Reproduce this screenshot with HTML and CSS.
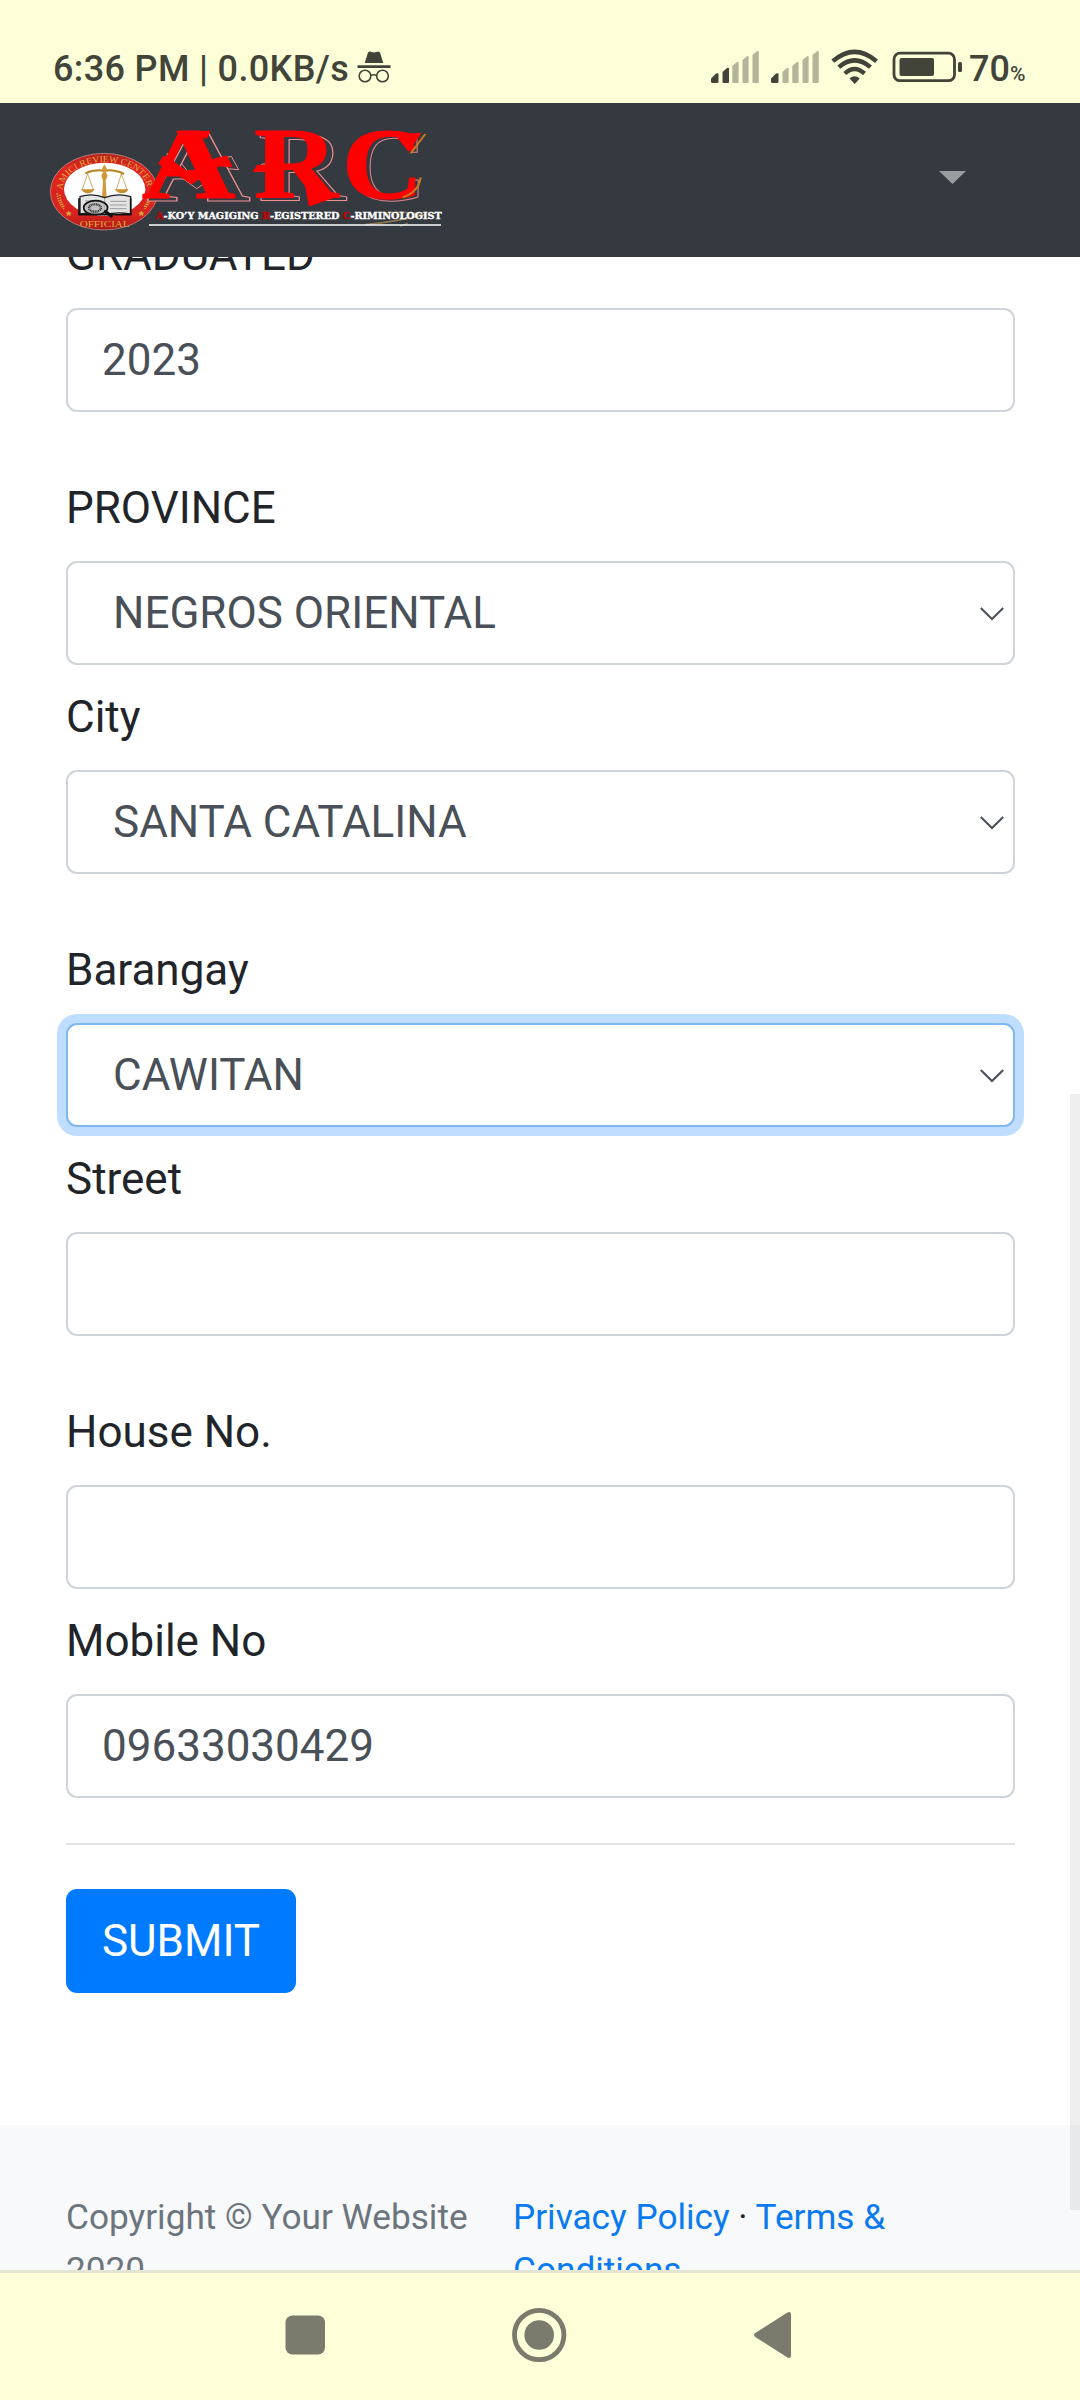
FILE: index.html
```html
<!DOCTYPE html>
<html lang="en">
<head>
<meta charset="utf-8">
<title>ARC</title>
<link rel="stylesheet" href="styles.css">
</head>
<body>
<div class="screen">
  <header class="status">
    <span class="status-text">6:36 PM | 0.0KB/s</span>
    <svg class="incognito" viewBox="0 0 34 32" width="34" height="32">
      <path d="M11 1.5 12.5.4 17 1.6 21.500.4 23 1.500 26.300 11.900H7.700Z" fill="#42443a"/>
      <path d="M.5 14.200h33v2.800H.5z" fill="#42443a"/>
      <g fill="none" stroke="#42443a" stroke-width="1.600"><circle cx="8" cy="25" r="5.800"/><circle cx="25.500" cy="25" r="5.800"/><path d="M13.700 24.500q3-1.500 6 0"/></g>
    </svg>
    <svg class="indicators" viewBox="0 0 258 40" width="258" height="40">
      <g fill="#42443a">
        <path d="M1 32.500V29.500L6 24.500q2.500-1 2.500 1v7q0 1.500-1.500 1.500H2.500Q1 34 1 32.500Z"/>
        <path d="M12.500 33V23L17 19q2-.8 2 1v13q0 1-1 1h-4.500q-1 0-1-1Z"/>
        <path d="M61 32.500V29.500L66 24.500q2.500-1 2.500 1v7q0 1.500-1.500 1.500h-4.500q-1.500 0-1.500-1.500Z"/>
      </g>
      <g fill="#b4b49a">
        <path d="M22.300 33V17L27 13q1.600-.7 1.600 1v19q0 1-1 1h-4.300q-1 0-1-1Z"/>
        <path d="M32.500 33V11L37 7.200q1.600-.7 1.600 1V33q0 1-1 1h-4.100q-1 0-1-1Z"/>
        <path d="M42.500 33V6L47 2.200q1.800-.7 1.800 1V33q0 1-1 1h-4.300q-1 0-1-1Z"/>
        <path d="M72.500 33V23L77 19q1.600-.7 1.600 1v13q0 1-1 1h-4.100q-1 0-1-1Z"/>
        <path d="M82.300 33V17L87 13q1.600-.7 1.600 1v19q0 1-1 1h-4.300q-1 0-1-1Z"/>
        <path d="M92.500 33V11L97 7.200q1.600-.7 1.600 1V33q0 1-1 1h-4.100q-1 0-1-1Z"/>
        <path d="M102.500 33V6L107 2.200q1.800-.7 1.800 1V33q0 1-1 1h-4.300q-1 0-1-1Z"/>
      </g>
      <g fill="none" stroke="#42443a" stroke-width="4.400">
        <path d="M122.800 12.200Q144.500-6.500 166.500 12.200"/>
        <path d="M128.800 18.200Q144.500 4.500 160.500 18.200"/>
        <path d="M134.800 24.500Q144.500 15.500 154.500 24.500"/>
      </g>
      <path d="M139.500 29.500q5-4.500 10.300 0L144.700 35Z" fill="#42443a"/>
      <rect x="184" y="4.200" width="60.500" height="27.500" rx="6" fill="none" stroke="#42443a" stroke-width="2.800"/>
      <rect x="189.500" y="9" width="34.500" height="18" rx="2" fill="#42443a"/>
      <rect x="248" y="13" width="4" height="10" rx="1.500" fill="#42443a"/>
    </svg>
    <span class="battery">70<small>%</small></span>
  </header>

  <nav class="navbar">
    <svg class="logo" viewBox="0 -21 1290 462" width="430" height="154">
      <defs>
        <linearGradient id="ring" x1="0" y1="0" x2="0" y2="1"><stop offset="0" stop-color="#b3231f"/><stop offset=".2" stop-color="#df2520"/><stop offset=".8" stop-color="#d9231e"/><stop offset="1" stop-color="#a91b18"/></linearGradient>
        <path id="seal-top" d="M98 240A124 82 0 0 1 352 240"/>
      </defs>
      <ellipse cx="222" cy="245" rx="161" ry="115" fill="url(#ring)" stroke="#c9a0a0" stroke-width="2"/>
      <ellipse cx="224" cy="238" rx="122" ry="80" fill="#fff"/>
      <text class="seal"><textPath href="#seal-top" textLength="326" lengthAdjust="spacingAndGlyphs">AMICI REVIEW CENTER</textPath></text>
      <text class="seal" x="149" y="350" textLength="150" lengthAdjust="spacingAndGlyphs">OFFICIAL</text>
      <g fill="none" stroke="#d5a43c" stroke-width="5" stroke-dasharray="4 3"><path d="M82 250q0 24 20 47M90 254q0 22 14 38M364 250q0 24-20 47M356 254q0 22-14 38"/></g>
      <path d="m116 302 3 5 6 1-4 4 1 6-6-3-6 3 1-6-4-4 6-1zM334 302l3 5 6 1-4 4 1 6-6-3-6 3 1-6-4-4 6-1z" fill="#d5a43c"/>
      <g fill="none" stroke="#b98324" stroke-width="3">
        <path d="M166 190q25-12 57-8 32-4 59 10" stroke-width="6"/>
        <path d="m173 192-17 47m17-47 17 47M274 192l-15 47m15-47 17 47" stroke-width="2"/>
      </g>
      <path d="M153 238h41q-7 12-20 12t-21-12ZM254 238h42q-7 12-20 12t-22-12Z" fill="#c58d2c"/>
      <path d="M223 163l8 14-3 10 5 10-6 15 3 53h-14l3-53-5-15 5-10-3-10Z" fill="#cf9a3a"/>
      <path d="M150 260q38-12 74 3 38-15 78-3v52q-40-8-78 2-34-10-74-2Z" fill="#e4e4e4" stroke="#222" stroke-width="4"/>
      <path d="M147 265v49h155v-49" fill="none" stroke="#111" stroke-width="5"/>
      <path d="M165 273h42M165 282h42M240 274h50M240 285h50M240 296h50M160 302h44M224 264v46" fill="none" stroke="#777" stroke-width="2"/>
      <ellipse cx="197" cy="293" rx="36" ry="21" fill="#b9b9b9" fill-opacity=".8" stroke="#111" stroke-width="5"/>
      <ellipse cx="195" cy="294" rx="18" ry="11" fill="none" stroke="#333" stroke-width="7" stroke-dasharray="3 2"/>
      <path d="m226 305 18 13" stroke="#111" stroke-width="10" stroke-linecap="round"/>

      <g class="arc-shadow">
        <path d="M412 130 436 139 497 212 560 150 604 139 626 179 590 176 500 236 410 170Z"/>
        <text x="350" y="273" textLength="312" lengthAdjust="spacingAndGlyphs">A</text>
        <path d="M678 184 696 162H724V184Z"/>
        <text x="685" y="273" textLength="262" lengthAdjust="spacingAndGlyphs">R</text>
        <text class="gold" x="950" y="274" textLength="240" lengthAdjust="spacingAndGlyphs">C</text>
      </g>
      <g class="arc-front">
        <text x="335" y="265" textLength="282" lengthAdjust="spacingAndGlyphs">A</text>
        <path d="M400 139 424 146 434 158 486 196 552 147 590 138 606 170 566 168 484 222 416 174 386 162Z"/>
        <path d="M440 64H540L530 84H456Z"/>
        <text x="672" y="265" textLength="252" lengthAdjust="spacingAndGlyphs">R</text>
        <path d="M670 184 682 166H712V184Z"/>
        <path d="M826 225 838 288 912 262 890 245Z"/>
        <text x="936" y="268" textLength="244" lengthAdjust="spacingAndGlyphs">C</text>
        <path d="M1098 76 1172 70 1136 124Z"/>
      </g>
      <path d="M1186 72 1142 130M1172 202Q1166 246 1118 262" fill="none" stroke="#c9791c" stroke-width="6"/>
      <path d="M1060 310q50-8 115 3M1005 344q90-8 180-30M1110 348q18-3 22-10" fill="none" stroke="#a98f55" stroke-width="5" opacity=".7"/>
      <text class="tagline" x="378" y="327" textLength="857" lengthAdjust="spacingAndGlyphs"><tspan class="initial">A</tspan>-KO’Y MAGIGING <tspan class="initial">R</tspan>-EGISTERED <tspan class="initial">C</tspan>-RIMINOLOGIST</text>
      <path d="M357 345h876" stroke="#fff" stroke-width="4"/>
    </svg>
    <svg class="caret" viewBox="0 0 27 13" width="27" height="13"><path d="M0 0h27L13.500 13Z" fill="#9a9da0"/></svg>
  </nav>

  <main class="page">
    <form class="form">
      <label class="label first" for="year">GRADUATED</label>
      <input class="control" id="year" value="2023">

      <label class="label wide" for="province">PROVINCE</label>
      <div class="picker">
        <select class="control" id="province"><option>NEGROS ORIENTAL</option></select>
        <svg class="chevron" viewBox="0 0 24 14" width="24" height="14"><path d="M.8 1 12 12 23.200 1"/></svg>
      </div>

      <label class="label" for="city">City</label>
      <div class="picker">
        <select class="control" id="city"><option>SANTA CATALINA</option></select>
        <svg class="chevron" viewBox="0 0 24 14" width="24" height="14"><path d="M.8 1 12 12 23.200 1"/></svg>
      </div>

      <label class="label wide" for="barangay">Barangay</label>
      <div class="picker">
        <select class="control focused" id="barangay"><option>CAWITAN</option></select>
        <svg class="chevron" viewBox="0 0 24 14" width="24" height="14"><path d="M.8 1 12 12 23.200 1"/></svg>
      </div>

      <label class="label" for="street">Street</label>
      <input class="control" id="street">

      <label class="label wide" for="house">House No.</label>
      <input class="control" id="house">

      <label class="label" for="mobile">Mobile No</label>
      <input class="control" id="mobile" value="09633030429">

      <hr class="rule">
      <button class="submit" type="button">SUBMIT</button>
    </form>

    <footer class="footer">
      <div class="copyright">Copyright © Your Website 2020</div>
      <div class="links"><a href="#">Privacy Policy</a> · <a href="#">Terms &amp; Conditions</a></div>
    </footer>
  </main>

  <div class="softkeys">
    <svg viewBox="0 0 1080 127" width="1080" height="127" fill="#7a7b6c">
      <rect x="285.500" y="42.500" width="39.500" height="39" rx="7"/>
      <circle cx="539.200" cy="62" r="24.700" fill="none" stroke="#7a7b6c" stroke-width="4.800"/>
      <circle cx="539.200" cy="62" r="14.800"/>
      <path d="M755.200 60 787.500 39.500Q791 38 791 42V82Q791 86 787.500 84.500L755.200 64Q753 62 755.200 60Z"/>
    </svg>
  </div>
  <div class="scrollbar"></div>
</div>
</body>
</html>
```

FILE: styles.css
```css
* { box-sizing: border-box; }

body {
  margin: 0;
  font-family: Roboto, "Liberation Sans", sans-serif;
  font-size: 44px;
  line-height: 66px;
  color: #212529;
  background: #fff;
}

.screen {
  position: relative;
  display: flex;
  flex-direction: column;
  width: 1080px;
  height: 2400px;
  overflow: hidden;
}

.status {
  display: flex;
  flex: none;
  align-items: flex-start;
  height: 103px;
  padding: 48px 0 0 53px;
  background: #fcffd8;
  color: #42443a;
  font-size: 36px;
  font-weight: 500;
  line-height: 42px;
}

.status-text {
  width: 304px;
  letter-spacing: 0.35px;
  white-space: nowrap;
}

.incognito { margin-top: 3px; }
.indicators { margin-left: 319px; margin-top: 1px; }
.battery { margin-left: 1px; white-space: nowrap; }
.battery small { font-size: 21px; }

.navbar {
  display: flex;
  flex: none;
  justify-content: space-between;
  height: 154px;
  padding: 0 114px 0 30px;
  background: #353a41;
}

.caret { margin-top: 68px; }

.seal {
  font: 27px "Liberation Serif", serif;
  fill: #e0aa3e;
}

.arc-front, .arc-shadow {
  font: bold 307px "Liberation Serif", serif;
}

.arc-front { fill: #f00; stroke: #f00; stroke-width: 3; }
.arc-shadow { fill: #353a41; stroke: #ed8f8f; stroke-width: 3; }
.arc-shadow .gold { stroke: #d9838a; }

.tagline {
  font: bold 27px "DejaVu Serif", serif;
  fill: #fff;
  stroke: #fff;
  stroke-width: 1;
}

.initial { fill: #c40000; stroke: #c40000; }

.page {
  flex: 1;
  min-height: 0;
  overflow: hidden;
}

.form {
  display: flex;
  flex-direction: column;
  height: 1868px;
  padding: 0 65.500px 0 66px;
}

.label {
  flex: none;
  height: 66px;
  margin: 18.500px 0 20px;
}

.label.wide { margin-top: 62.500px; }
.label.first { margin-top: -35px; }

.control {
  display: block;
  flex: none;
  width: 100%;
  height: 104px;
  margin: 0 0 0.5px;
  padding: 0 34px;
  border: 2px solid #ced4da;
  border-radius: 11px;
  outline: none;
  background: #fff;
  color: #495057;
  font: inherit;
  appearance: none;
}

.picker { position: relative; flex: none; }
.picker .control { padding-left: 45px; }

.focused {
  border-color: #80b8f0;
  box-shadow: 0 0 0 9px #bfdeff;
}

.chevron {
  position: absolute;
  right: 11px;
  top: 46px;
  fill: none;
  stroke: #495057;
  stroke-width: 2;
}

.rule {
  flex: none;
  width: 100%;
  height: 2.750px;
  margin: 44px 0;
  border: 0;
  background: #e3e3e3;
}

.submit {
  flex: none;
  align-self: flex-start;
  width: 230px;
  height: 104px;
  padding: 0;
  border: 0;
  border-radius: 11px;
  background: #007bff;
  color: #fff;
  font: inherit;
}

.footer {
  display: flex;
  height: 240px;
  padding: 66px 66px 0;
  background: #f8f9fb;
  font-size: 35.200px;
  line-height: 52.800px;
}

.copyright { flex: none; width: 447px; padding-right: 40px; color: #6c757d; }
.links { flex: 1; }
.links a { color: #0a7af0; text-decoration: none; }

.softkeys {
  flex: none;
  height: 130px;
  border-top: 3px solid #e4e4d3;
  background: #fcffd8;
}

.softkeys svg { display: block; }

.scrollbar {
  position: absolute;
  left: 1070px;
  top: 1094px;
  width: 10px;
  height: 1116px;
  background: rgba(0, 0, 0, 0.063);
}
```
